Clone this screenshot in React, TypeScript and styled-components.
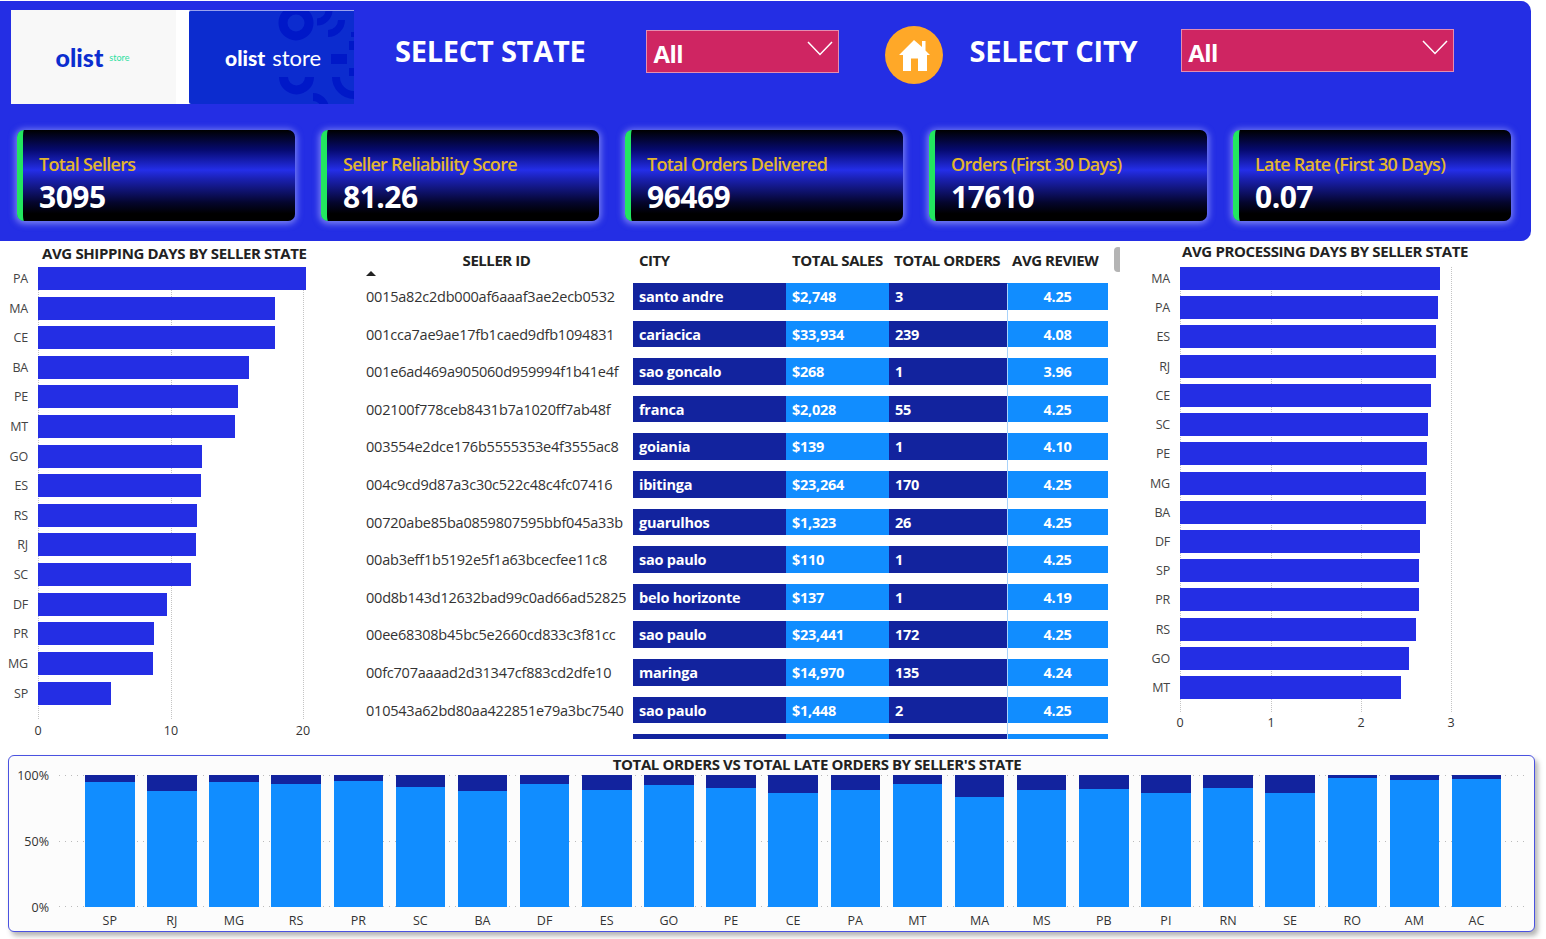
import React from 'react';
import styled, { createGlobalStyle } from 'styled-components';

const GlobalStyle = createGlobalStyle`
  html, body {
    margin: 0;
    padding: 0;
    background: #fff;
    font-family: 'Open Sans', 'Noto Sans', sans-serif;
  }
  * { box-sizing: border-box; }
`;

const blue = '#242ee4';
const navy = '#12239e';
const sky = '#118dff';

const Page = styled.div`
  width: 1546px;
  height: 939px;
  overflow: hidden;
  color: #222;
  padding-top: 1px;
`;

/* header */
const Header = styled.header`
  width: 1531px;
  height: 240px;
  background: ${blue};
  border-radius: 0 10px 10px 0;
  padding: 9px 20px 0 11px;
`;
const TopRow = styled.div`
  display: flex;
  align-items: flex-start;
  height: 120px;
`;
const LogoPair = styled.div`
  display: flex;
  width: 343px;
  height: 94px;
  background: #fff;
`;
const LogoLight = styled.div`
  width: 165px;
  background: #f8f8f8;
  display: flex;
  align-items: center;
  justify-content: center;
  gap: 6px;
  padding-right: 2px;
`;
const LogoDark = styled.div`
  position: relative;
  margin-left: 13px;
  width: 165px;
  background: #0c2ccf;
  border-top: 1px solid #9aa2ee;
  overflow: hidden;
  display: flex;
  align-items: center;
  padding-left: 36px;
  gap: 7px;
  border-radius: 2px 0 0 2px;
`;
const LogoWord = styled.span<{ $c: string; $s: number; $w: number }>`
  position: relative;
  font-family: 'Lato', sans-serif;
  color: ${(p) => p.$c};
  font-size: ${(p) => p.$s}px;
  font-weight: ${(p) => p.$w};
  line-height: 1;
`;
const Pattern = styled.svg`
  position: absolute;
  left: 0;
  top: -1px;
`;
const SelectTitle = styled.h2<{ $left: number; $top: number }>`
  margin: ${(p) => p.$top}px 0 0 ${(p) => p.$left}px;
  font-size: 29px;
  line-height: 36px;
  font-weight: 700;
  color: #fff;
  letter-spacing: -0.25px;
  white-space: nowrap;
`;
const Slicer = styled.div<{ $w: number; $h: number; $left: number; $top: number }>`
  width: ${(p) => p.$w}px;
  height: ${(p) => p.$h}px;
  margin: ${(p) => p.$top}px 0 0 ${(p) => p.$left}px;
  flex: none;
  background: #cf2562;
  border: 1px solid #e58db0;
  display: flex;
  align-items: center;
  justify-content: space-between;
  padding: 4px 5px 0 6px;
  color: #fff;
  font-size: 24px;
  font-weight: 700;
  letter-spacing: -0.6px;
`;
const Chevron = styled.svg`
  margin-top: -10px;
`;
const HomeButton = styled.div`
  flex: none;
  margin: 16px 0 0 46px;
  width: 58px;
  height: 58px;
  border-radius: 50%;
  background: #ffa828;
  display: flex;
  align-items: center;
  justify-content: center;
`;
const KpiRow = styled.div`
  display: flex;
  gap: 26.5px;
  padding-left: 6px;
`;
const Kpi = styled.div`
  width: 277.5px;
  height: 91px;
  border-left: 6px solid #22e65f;
  border-radius: 7px;
  background: linear-gradient(180deg, #000 0%, #060a70 22%, #242ee8 44%, #1a20b0 54%, #04052c 80%, #000 92%);
  box-shadow: 0 1px 6px 2px rgba(190, 195, 255, 0.55);
  padding: 22px 0 0 16px;
`;
const KpiLabel = styled.div`
  color: #e3b62d;
  font-size: 18px;
  line-height: 24px;
  font-weight: 600;
  letter-spacing: -0.72px;
  white-space: nowrap;
`;
const KpiValue = styled.div`
  color: #fff;
  font-size: 30px;
  line-height: 38px;
  margin-top: 2px;
  font-weight: 700;
  letter-spacing: -0.5px;
`;

/* middle */
const Middle = styled.main`
  display: grid;
  grid-template-columns: 350px 770px 1fr;
  height: 514px;
`;
const ChartTitle = styled.div<{ $left: number; $top: number }>`
  margin: ${(p) => p.$top}px 0 0 ${(p) => p.$left}px;
  font-size: 15px;
  line-height: 20px;
  height: 20px;
  font-weight: 700;
  letter-spacing: -0.37px;
  white-space: nowrap;
`;
const BarsFrame = styled.div<{ $top: number }>`
  margin-top: ${(p) => p.$top}px;
`;
const HBarChart = styled.div<{ $labelW: number; $pitch: number }>`
  display: grid;
  grid-template-columns: ${(p) => p.$labelW}px 1fr;
  grid-auto-rows: ${(p) => p.$pitch}px;
  position: relative;
`;
const HLabel = styled.div`
  font-size: 12.5px;
  color: #444;
  letter-spacing: -0.2px;
  text-align: right;
  padding-right: 10px;
  line-height: 23px;
`;
const HTrack = styled.div`
  position: relative;
`;
const HBar = styled.div`
  position: relative;
  height: 23px;
  background: ${blue};
  z-index: 1;
`;
const GridLine = styled.div<{ $h: number }>`
  position: absolute;
  top: 0;
  height: ${(p) => p.$h}px;
  border-left: 1px dotted #c4c4c4;
`;
const Axis = styled.div<{ $left: number; $top: number; $w: number }>`
  position: relative;
  margin: ${(p) => p.$top}px 0 0 ${(p) => p.$left}px;
  width: ${(p) => p.$w}px;
  height: 16px;
`;
const Tick = styled.span`
  position: absolute;
  top: 0;
  transform: translateX(-50%);
  font-size: 12.5px;
  line-height: 16px;
  color: #333;
`;

/* table */
const TableWrap = styled.div`
  position: relative;
  padding: 9px 0 0 16px;
  height: 498px;
  overflow: hidden;
`;
const Grid = styled.div`
  display: grid;
  grid-template-columns: 267px 153px 103px 118px 101px;
  grid-auto-rows: 26.5px;
  row-gap: 11.12px;
`;
const HeadRow = styled.div`
  display: grid;
  grid-template-columns: 267px 153px 103px 118px 101px;
  height: 33px;
  position: relative;
`;
const Head = styled.div<{ $center?: boolean; $pad?: number; $padRight?: number }>`
  font-size: 15px;
  line-height: 20px;
  font-weight: 700;
  letter-spacing: -0.45px;
  white-space: nowrap;
  text-align: ${(p) => (p.$center ? 'center' : 'left')};
  padding-left: ${(p) => p.$pad ?? 0}px;
  padding-right: ${(p) => p.$padRight ?? 0}px;
`;
const SortArrow = styled.span`
  position: absolute;
  left: 0;
  top: 21px;
  width: 0;
  height: 0;
  border-left: 5px solid transparent;
  border-right: 5px solid transparent;
  border-bottom: 5px solid #222;
`;
const IdCell = styled.div`
  font-size: 14.5px;
  line-height: 27px;
  letter-spacing: -0.22px;
  white-space: nowrap;
  color: #333;
`;
const Cell = styled.div<{ $bg: string; $center?: boolean }>`
  background: ${(p) => p.$bg};
  color: #fff;
  font-size: 14.5px;
  font-weight: 700;
  line-height: 28px;
  letter-spacing: -0.25px;
  padding: 0 6px;
  text-align: ${(p) => (p.$center ? 'center' : 'left')};
  white-space: nowrap;
`;
const ReviewRule = styled.div`
  position: absolute;
  left: 657px;
  top: 43px;
  bottom: 0;
  border-left: 1px solid #a9d3fb;
`;
const ScrollThumb = styled.div`
  position: absolute;
  left: 764px;
  top: 6px;
  width: 8px;
  height: 25px;
  border-radius: 4px;
  background: #b4b4b4;
`;

/* bottom card */
const Card = styled.section`
  position: relative;
  margin-left: 8px;
  width: 1527px;
  height: 177px;
  background: #fcfcfc;
  border: 1px solid #4a52e0;
  border-radius: 6px;
  box-shadow: 3px 4px 5px rgba(90, 90, 90, 0.45);
`;
const CardTitle = styled.div`
  text-align: center;
  font-size: 15px;
  line-height: 16px;
  font-weight: 700;
  letter-spacing: -0.39px;
  padding-left: 91px;
  height: 19px;
`;
const Plot = styled.div`
  display: grid;
  grid-template-columns: 50px 1fr;
`;
const YAxis = styled.div`
  height: 132px;
  position: relative;
`;
const YTick = styled.span<{ $top: number }>`
  position: absolute;
  right: 10px;
  top: ${(p) => p.$top}px;
  font-size: 12.5px;
  line-height: 14px;
  color: #333;
  transform: translateY(-50%);
`;
const Columns = styled.div`
  position: relative;
  display: flex;
  gap: 12.64px;
  padding-left: 26px;
  height: 132px;
  background-image:
    linear-gradient(90deg, #bbb 1px, transparent 1px),
    linear-gradient(90deg, #bbb 1px, transparent 1px),
    linear-gradient(90deg, #bbb 1px, transparent 1px);
  background-size: 6px 1px;
  background-repeat: repeat-x;
  background-position: 0 0, 0 66px, 0 131px;
  width: 1468px;
`;
const Column = styled.div`
  flex: none;
  width: 49.5px;
  height: 132px;
  background: ${sky};
  display: flex;
  flex-direction: column;
  position: relative;
`;
const ColumnTop = styled.div`
  background: ${navy};
`;
const ColumnName = styled.span`
  position: absolute;
  left: 0;
  right: 0;
  top: 139px;
  text-align: center;
  font-size: 12.5px;
  line-height: 14px;
  color: #333;
`;

const leftBars: [string, number][] = [
  ['PA', 268], ['MA', 237], ['CE', 236.5], ['BA', 211], ['PE', 200], ['MT', 196.5], ['GO', 163.5], ['ES', 163],
  ['RS', 159], ['RJ', 157.5], ['SC', 153], ['DF', 128.5], ['PR', 115.5], ['MG', 115], ['SP', 73],
];
const rightBars: [string, number][] = [
  ['MA', 260], ['PA', 258], ['ES', 256], ['RJ', 255.5], ['CE', 250.5], ['SC', 248], ['PE', 247], ['MG', 246],
  ['BA', 245.5], ['DF', 240], ['SP', 239], ['PR', 238.5], ['RS', 235.5], ['GO', 228.5], ['MT', 221],
];
const rows = [
  ['0015a82c2db000af6aaaf3ae2ecb0532', 'santo andre', '$2,748', '3', '4.25'],
  ['001cca7ae9ae17fb1caed9dfb1094831', 'cariacica', '$33,934', '239', '4.08'],
  ['001e6ad469a905060d959994f1b41e4f', 'sao goncalo', '$268', '1', '3.96'],
  ['002100f778ceb8431b7a1020ff7ab48f', 'franca', '$2,028', '55', '4.25'],
  ['003554e2dce176b5555353e4f3555ac8', 'goiania', '$139', '1', '4.10'],
  ['004c9cd9d87a3c30c522c48c4fc07416', 'ibitinga', '$23,264', '170', '4.25'],
  ['00720abe85ba0859807595bbf045a33b', 'guarulhos', '$1,323', '26', '4.25'],
  ['00ab3eff1b5192e5f1a63bcecfee11c8', 'sao paulo', '$110', '1', '4.25'],
  ['00d8b143d12632bad99c0ad66ad52825', 'belo horizonte', '$137', '1', '4.19'],
  ['00ee68308b45bc5e2660cd833c3f81cc', 'sao paulo', '$23,441', '172', '4.25'],
  ['00fc707aaaad2d31347cf883cd2dfe10', 'maringa', '$14,970', '135', '4.24'],
  ['010543a62bd80aa422851e79a3bc7540', 'sao paulo', '$1,448', '2', '4.25'],
  ['', '', '', '', ''],
];
const kpis = [
  ['Total Sellers', '3095'],
  ['Seller Reliability Score', '81.26'],
  ['Total Orders Delivered', '96469'],
  ['Orders (First 30 Days)', '17610'],
  ['Late Rate (First 30 Days)', '0.07'],
];
const columns: [string, number][] = [
  ['SP', 7], ['RJ', 16], ['MG', 7], ['RS', 8.5], ['PR', 6], ['SC', 12], ['BA', 16], ['DF', 9], ['ES', 14.5], ['GO', 10],
  ['PE', 13], ['CE', 18], ['PA', 14.5], ['MT', 8.5], ['MA', 22], ['MS', 14.5], ['PB', 13.5], ['PI', 18], ['RN', 13],
  ['SE', 17.5], ['RO', 3], ['AM', 5], ['AC', 4],
];

function Bars({ data, labelW, pitch, ticks, lineH }: { data: [string, number][]; labelW: number; pitch: number; ticks: number[]; lineH: number }) {
  return (
    <HBarChart $labelW={labelW} $pitch={pitch}>
      {data.map(([name, w]) => (
        <React.Fragment key={name}>
          <HLabel>{name}</HLabel>
          <HTrack>
            <HBar style={{ width: w }} />
          </HTrack>
        </React.Fragment>
      ))}
      {ticks.map((t) => (
        <GridLine key={t} $h={lineH} style={{ left: labelW + t }} />
      ))}
    </HBarChart>
  );
}

export default function App() {
  return (
    <Page>
      <GlobalStyle />
      <Header>
        <TopRow>
          <LogoPair>
            <LogoLight>
              <LogoWord $c="#0b2dcf" $s={25} $w={900}>olist</LogoWord>
              <LogoWord $c="#2fe0a0" $s={9} $w={400}>store</LogoWord>
            </LogoLight>
            <LogoDark>
              <Pattern width="165" height="94" viewBox="0 0 165 94">
                <g fill="none" stroke="#0018c8">
                  <circle cx="107" cy="13" r="13" strokeWidth="9" />
                  <path d="M140 0 A12 12 0 0 1 128 12" strokeWidth="7" />
                  <path d="M152.5 10 A13.5 13.5 0 0 1 139 23.5" strokeWidth="7" />
                  <path d="M94.5 67 A13 13 0 0 0 120.5 67" strokeWidth="9" />
                  <path d="M147 67 A18 18 0 0 0 165 85" strokeWidth="8" />
                  <path d="M124 87 A12 12 0 0 1 136 99" strokeWidth="8" />
                </g>
                <rect x="142" y="44" width="16" height="10" fill="#0018c8" />
                <rect x="160" y="31" width="5" height="9" fill="#0018c8" />
                <rect x="160" y="58" width="5" height="8" fill="#0018c8" />
                <rect x="162" y="22" width="3" height="5" fill="#0018c8" />
              </Pattern>
              <LogoWord $c="#fff" $s={21} $w={900}>olist</LogoWord>
              <LogoWord $c="#fff" $s={22} $w={400}>store</LogoWord>
            </LogoDark>
          </LogoPair>
          <SelectTitle $left={41} $top={23}>SELECT STATE</SelectTitle>
          <Slicer $w={193} $h={43} $left={61} $top={20}>
            All
            <Chevron width="26" height="15" viewBox="0 0 26 15">
              <path d="M1 1 L13 13.5 L25 1" fill="none" stroke="#fff" strokeWidth="1.5" />
            </Chevron>
          </Slicer>
          <HomeButton>
            <svg width="31" height="31" viewBox="0 0 31 31">
              <path fill="#fff" d="M15 0 L23 7 V1 H26.5 V10.5 L31 15 H28 V31 H19 V18.5 H12 V31 H4 V15 H0 Z" />
            </svg>
          </HomeButton>
          <SelectTitle $left={26} $top={23}>SELECT CITY</SelectTitle>
          <Slicer $w={273} $h={43} $left={44} $top={19}>
            All
            <Chevron width="26" height="15" viewBox="0 0 26 15">
              <path d="M1 1 L13 13.5 L25 1" fill="none" stroke="#fff" strokeWidth="1.5" />
            </Chevron>
          </Slicer>
        </TopRow>
        <KpiRow>
          {kpis.map(([label, value]) => (
            <Kpi key={label}>
              <KpiLabel>{label}</KpiLabel>
              <KpiValue>{value}</KpiValue>
            </Kpi>
          ))}
        </KpiRow>
      </Header>
      <Middle>
        <div>
          <ChartTitle $left={42} $top={2}>AVG SHIPPING DAYS BY SELLER STATE</ChartTitle>
          <BarsFrame $top={4}>
            <Bars data={leftBars} labelW={38} pitch={29.62} ticks={[0, 132.5, 265]} lineH={452} />
          </BarsFrame>
          <Axis $left={38} $top={12} $w={280}>
            <Tick style={{ left: 0 }}>0</Tick>
            <Tick style={{ left: 133 }}>10</Tick>
            <Tick style={{ left: 265 }}>20</Tick>
          </Axis>
        </div>
        <TableWrap>
          <HeadRow>
            <Head $center $padRight={6}>SELLER ID</Head>
            <Head $pad={6}>CITY</Head>
            <Head $pad={6}>TOTAL SALES</Head>
            <Head $pad={5}>TOTAL ORDERS</Head>
            <Head $pad={5}>AVG REVIEW</Head>
            <SortArrow />
          </HeadRow>
          <Grid>
            {rows.map((r, i) => (
              <React.Fragment key={i}>
                <IdCell>{r[0]}</IdCell>
                <Cell $bg={navy}>{r[1]}</Cell>
                <Cell $bg={sky}>{r[2]}</Cell>
                <Cell $bg={navy}>{r[3]}</Cell>
                <Cell $bg={sky} $center>{r[4]}</Cell>
              </React.Fragment>
            ))}
          </Grid>
          <ReviewRule />
          <ScrollThumb />
        </TableWrap>
        <div>
          <ChartTitle $left={62} $top={0}>AVG PROCESSING DAYS BY SELLER STATE</ChartTitle>
          <BarsFrame $top={6}>
            <Bars data={rightBars} labelW={60} pitch={29.22} ticks={[0, 90.5, 181, 271]} lineH={445} />
          </BarsFrame>
          <Axis $left={60} $top={10} $w={300}>
            <Tick style={{ left: 0 }}>0</Tick>
            <Tick style={{ left: 91 }}>1</Tick>
            <Tick style={{ left: 181 }}>2</Tick>
            <Tick style={{ left: 271 }}>3</Tick>
          </Axis>
        </div>
      </Middle>
      <Card>
        <CardTitle>TOTAL ORDERS VS TOTAL LATE ORDERS BY SELLER&apos;S STATE</CardTitle>
        <Plot>
          <YAxis>
            <YTick $top={1}>100%</YTick>
            <YTick $top={67}>50%</YTick>
            <YTick $top={133}>0%</YTick>
          </YAxis>
          <Columns>
            {columns.map(([name, top]) => (
              <Column key={name}>
                <ColumnTop style={{ height: top }} />
                <ColumnName>{name}</ColumnName>
              </Column>
            ))}
          </Columns>
        </Plot>
      </Card>
    </Page>
  );
}
